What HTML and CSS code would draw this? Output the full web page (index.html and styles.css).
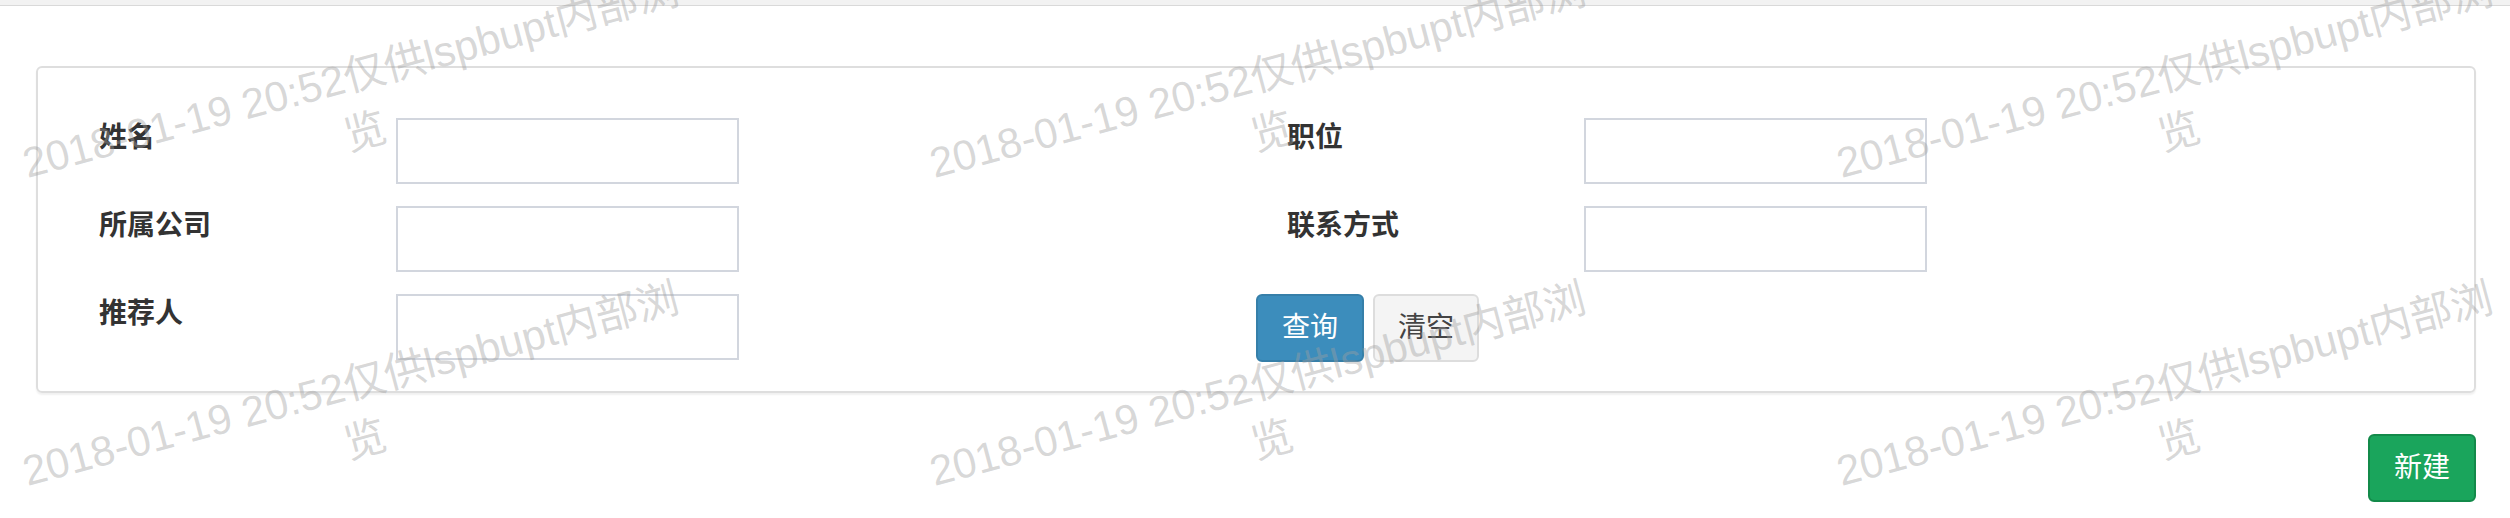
FILE: index.html
```html
<!DOCTYPE html>
<html lang="zh-CN">
<head>
<meta charset="utf-8">
<title>查询</title>
<link rel="stylesheet" href="styles.css">
</head>
<body>
<div class="topbar"></div>
<div class="page">
  <div class="panel">
    <form class="search-form">
      <div class="field">
        <label class="field-label">姓名</label>
        <input class="field-input" type="text">
      </div>
      <div class="field">
        <label class="field-label">职位</label>
        <input class="field-input" type="text">
      </div>
      <div class="field">
        <label class="field-label">所属公司</label>
        <input class="field-input" type="text">
      </div>
      <div class="field">
        <label class="field-label">联系方式</label>
        <input class="field-input" type="text">
      </div>
      <div class="field">
        <label class="field-label">推荐人</label>
        <input class="field-input" type="text">
      </div>
      <div class="actions">
        <button type="button" class="btn btn-primary">查询</button>
        <button type="button" class="btn btn-default">清空</button>
      </div>
    </form>
  </div>
  <div class="toolbar">
    <button type="button" class="btn btn-success">新建</button>
  </div>
</div>
<div class="watermarks">
  <div class="wm-grid">
    <div class="wm">2018-01-19 20:52仅供lspbupt内部浏<br>览</div>
    <div class="wm">2018-01-19 20:52仅供lspbupt内部浏<br>览</div>
    <div class="wm">2018-01-19 20:52仅供lspbupt内部浏<br>览</div>
    <div class="wm">2018-01-19 20:52仅供lspbupt内部浏<br>览</div>
    <div class="wm">2018-01-19 20:52仅供lspbupt内部浏<br>览</div>
    <div class="wm">2018-01-19 20:52仅供lspbupt内部浏<br>览</div>
  </div>
</div>
</body>
</html>
```
FILE: styles.css
```css
* { box-sizing: border-box; }

html {
  overflow: hidden;
}

html, body {
  margin: 0;
  padding: 0;
  background: #fff;
}

body {
  position: relative;
  overflow: hidden;
  font-family: "Liberation Sans", "Noto Sans CJK SC", sans-serif;
  color: #333;
}

.topbar {
  height: 6px;
  background: #f2f2f2;
  border-bottom: 1px solid #d9d9d9;
}

.page {
  padding: 60px 34px 16px 36px;
}

.panel {
  width: 2440px;
  border: 2px solid #dedede;
  border-radius: 6px;
  box-shadow: 0 2px 2px rgba(0, 0, 0, 0.06);
  padding: 50px 0 29px 61px;
}

.search-form {
  display: grid;
  grid-template-columns: 1188px 1188px;
  row-gap: 22px;
  margin: 0;
}

.field {
  display: grid;
  grid-template-columns: 297px 343px;
  align-items: start;
}

.field-label {
  font-size: 28px;
  font-weight: bold;
  line-height: 40px;
  color: #333;
}

.field-input {
  width: 343px;
  height: 66px;
  margin: 0;
  border: 2px solid #d2d6de;
  border-radius: 0;
  background: #fff;
  font-size: 28px;
  padding: 0 24px;
  outline: none;
}

.actions {
  display: flex;
  gap: 9px;
  margin-left: -31px;
}

.btn {
  height: 68px;
  padding: 0;
  border: 2px solid transparent;
  border-radius: 6px;
  font-family: "Liberation Sans", "Noto Sans CJK SC", sans-serif;
  font-size: 28px;
  line-height: 1;
  white-space: nowrap;
  text-align: center;
  cursor: pointer;
}

.btn-primary {
  width: 108px;
  background: #3c8dbc;
  border-color: #367fa9;
  color: #fff;
}

.btn-default {
  width: 106px;
  background: #f4f4f4;
  border-color: #dddddd;
  color: #444;
}

.btn-success {
  width: 108px;
  background: #1aa55c;
  border-color: #138a4a;
  color: #fff;
}

.toolbar {
  display: flex;
  justify-content: flex-end;
  width: 2440px;
  margin-top: 41px;
}

.watermarks {
  position: absolute;
  top: 0;
  left: 0;
  width: 2510px;
  height: 518px;
  overflow: hidden;
  pointer-events: none;
  z-index: 10;
}

.wm-grid {
  display: grid;
  grid-template-columns: repeat(3, 800px);
  grid-auto-rows: 114px;
  column-gap: 107px;
  row-gap: 194px;
  margin: 47px 0 0 -42px;
}

.wm {
  width: 800px;
  height: 114px;
  text-align: center;
  white-space: nowrap;
  font-family: "Liberation Sans", "Noto Sans CJK SC", sans-serif;
  font-size: 42px;
  line-height: 57px;
  color: rgba(160, 160, 160, 0.42);
  transform: rotate(-15deg);
  transform-origin: center center;
}
```
